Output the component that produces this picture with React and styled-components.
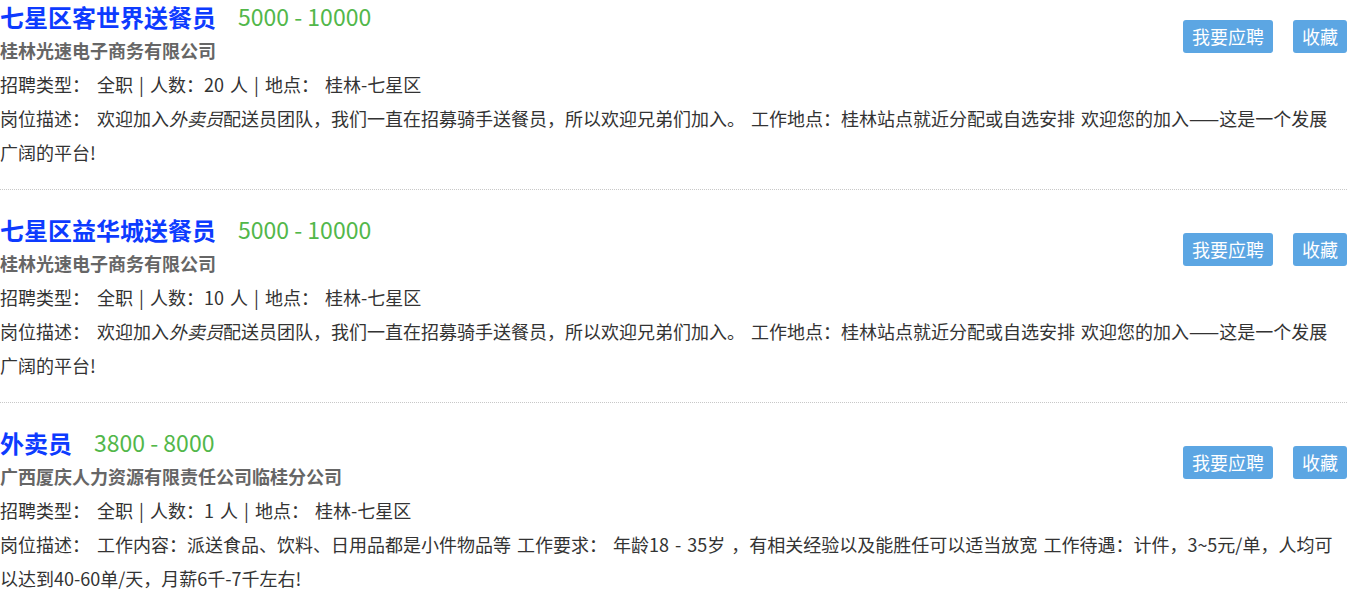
import styled, { createGlobalStyle } from "styled-components";

const GlobalStyle = createGlobalStyle`
  body {
    margin: 0;
    background: #fff;
    font-family: "Noto Sans CJK SC", "Noto Sans", sans-serif;
    color: #333;
  }
`;

const jobs = [
  {
    title: "七星区客世界送餐员",
    salary: "5000 - 10000",
    company: "桂林光速电子商务有限公司",
    count: "20",
    desc: (
      <>
        欢迎加入<em>外卖员</em>配送员团队，我们一直在招募骑手送餐员，所以欢迎兄弟们加入。 工作地点：桂林站点就近分配或自选安排 欢迎您的加入——这是一个发展广阔的平台!
      </>
    ),
  },
  {
    title: "七星区益华城送餐员",
    salary: "5000 - 10000",
    company: "桂林光速电子商务有限公司",
    count: "10",
    desc: (
      <>
        欢迎加入<em>外卖员</em>配送员团队，我们一直在招募骑手送餐员，所以欢迎兄弟们加入。 工作地点：桂林站点就近分配或自选安排 欢迎您的加入——这是一个发展广阔的平台!
      </>
    ),
  },
  {
    title: "外卖员",
    salary: "3800 - 8000",
    company: "广西厦庆人力资源有限责任公司临桂分公司",
    count: "1",
    desc: (
      <>
        工作内容：派送食品、饮料、日用品都是小件物品等 工作要求： 年龄18 - 35岁 ，有相关经验以及能胜任可以适当放宽 工作待遇：计件，3~5元/单，人均可以达到40-60单/天，月薪6千-7千左右!
      </>
    ),
  },
];

const List = styled.div`
  width: 1347px;
`;

const Item = styled.div`
  padding-bottom: 20px;
  border-bottom: 1px dotted #c8c8c8;
  & + & {
    margin-top: 23px;
  }
  &:last-child {
    border-bottom: none;
  }
`;

const Head = styled.div`
  display: flex;
  justify-content: space-between;
  align-items: flex-start;
`;

const TitleRow = styled.div`
  display: flex;
  align-items: center;
  gap: 22px;
  height: 33px;
`;

const Title = styled.a`
  font-size: 24px;
  font-weight: 700;
  color: #0d3bff;
  text-decoration: none;
  line-height: 33px;
`;

const Salary = styled.span`
  font-size: 23px;
  color: #52b74a;
  line-height: 33px;
`;

const Company = styled.div`
  font-size: 18px;
  font-weight: 700;
  color: #666;
  line-height: 34px;
`;

const Actions = styled.div`
  display: flex;
  gap: 20px;
  margin-top: 20px;
`;

const Button = styled.button`
  height: 33px;
  padding: 0 9px;
  border: none;
  border-radius: 3px;
  background: #5ca6e3;
  color: #fff;
  font-family: inherit;
  font-size: 18px;
  line-height: 33px;
  cursor: pointer;
`;

const Line = styled.div`
  font-size: 18px;
  line-height: 34px;
  word-spacing: 2px;
  padding-right: 4px;
  em {
    font-style: italic;
  }
`;

const Label = styled.span`
  margin-right: 7px;
`;

export default function App() {
  return (
    <>
      <GlobalStyle />
      <List>
        {jobs.map((job, i) => (
          <Item key={i}>
            <Head>
              <div>
                <TitleRow>
                  <Title href="#">{job.title}</Title>
                  <Salary>{job.salary}</Salary>
                </TitleRow>
                <Company>{job.company}</Company>
              </div>
              <Actions>
                <Button>我要应聘</Button>
                <Button>收藏</Button>
              </Actions>
            </Head>
            <Line>
              <Label>招聘类型：</Label>全职 | 人数：{job.count} 人 | 地点： 桂林-七星区
            </Line>
            <Line>
              <Label>岗位描述：</Label>
              {job.desc}
            </Line>
          </Item>
        ))}
      </List>
    </>
  );
}
